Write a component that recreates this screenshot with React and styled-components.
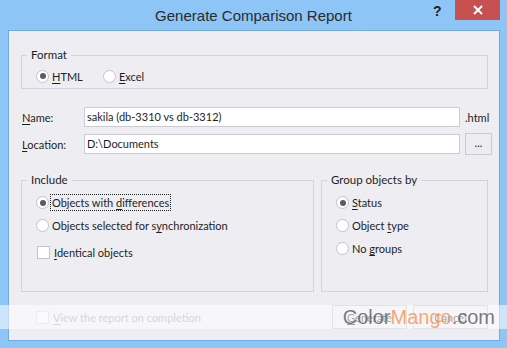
import React from "react";
import styled, { createGlobalStyle } from "styled-components";

const GlobalStyle = createGlobalStyle`
  html, body {
    margin: 0;
    padding: 0;
    overflow: hidden;
  }
  body {
    font-family: "Lato", "Liberation Sans", sans-serif;
  }
`;

const Window = styled.div`
  position: relative;
  width: 507px;
  height: 348px;
  background: #8cc5f6;
  display: flex;
  flex-direction: column;
`;

const TitleBar = styled.div`
  height: 30px;
  display: grid;
  grid-template-columns: 1fr auto 1fr;
  flex-shrink: 0;
`;

const Title = styled.div`
  grid-column: 2;
  font-family: "Liberation Sans", sans-serif;
  font-size: 15px;
  line-height: 30px;
  color: #2b2b2b;
  padding-top: 1px;
`;

const Controls = styled.div`
  grid-column: 3;
  justify-self: end;
  display: flex;
  align-items: flex-start;
  margin-right: 7px;
`;

const HelpButton = styled.div`
  width: 22px;
  font-family: "Liberation Sans", sans-serif;
  font-weight: bold;
  font-size: 14px;
  line-height: 20px;
  color: #222;
  padding-top: 1px;
`;

const CloseButton = styled.div`
  width: 45px;
  height: 20px;
  background: #c75050;
  display: flex;
  align-items: center;
  justify-content: center;
`;

const Client = styled.div`
  flex: 1;
  margin: 0 7px 7px 8px;
  background: #ededf2;
  border: 1px solid #71abdf;
  padding: 24px 11px 0 12px;
  display: flex;
  flex-direction: column;
  font-size: 11px;
  color: #1e1e1e;
`;

const GroupBox = styled.div`
  border: 1px solid #d3d3dc;
  padding: 0 0 ${(p) => p.$padBottom || 0}px 14px;
  box-sizing: border-box;
  height: ${(p) => (p.$height ? `${p.$height}px` : "auto")};
  width: ${(p) => (p.$width ? `${p.$width}px` : "auto")};
  flex: ${(p) => (p.$grow ? "1" : "none")};
  display: flex;
  flex-direction: column;
  align-items: flex-start;
`;

const Legend = styled.div`
  margin: -8px 0 0 -9px;
  padding: 0 4px;
  height: 14px;
  line-height: 14px;
  font-size: 11.5px;
  background: #ededf2;
  color: #1e1e1e;
`;

const OptionRow = styled.div`
  display: flex;
  align-items: center;
  height: ${(p) => p.$height || 23}px;
  margin-top: ${(p) => p.$gapTop || 0}px;
`;

const Option = styled.div`
  display: flex;
  align-items: center;
  width: ${(p) => (p.$width ? `${p.$width}px` : "auto")};
  color: ${(p) => (p.$disabled ? "#a3a3ae" : "#1e1e1e")};
`;

const RadioCircle = styled.span`
  box-sizing: border-box;
  width: 13px;
  height: 13px;
  border-radius: 50%;
  border: 1px solid #c2c2ca;
  background: #fff;
  display: flex;
  align-items: center;
  justify-content: center;
  flex-shrink: 0;
  margin-right: 1px;
  &::after {
    content: "";
    width: 6px;
    height: 6px;
    border-radius: 50%;
    background: ${(p) => (p.$checked ? "#5c5c5c" : "transparent")};
  }
`;

const Box = styled.span`
  box-sizing: border-box;
  width: 13px;
  height: 13px;
  border: 1px solid ${(p) => (p.$disabled ? "#d6d6de" : "#c2c2ca")};
  background: ${(p) => (p.$disabled ? "#f6f6f8" : "#fff")};
  flex-shrink: 0;
  margin-left: ${(p) => p.$offset || 0}px;
  margin-right: 2px;
`;

const Caption = styled.span`
  padding: 0 1px;
  line-height: 15px;
  border: 1px dotted ${(p) => (p.$focused ? "#222" : "transparent")};
  white-space: nowrap;
`;

const Key = styled.u`
  text-decoration: underline;
  text-underline-offset: 2px;
  text-decoration-thickness: 1px;
`;

const Fields = styled.div`
  display: grid;
  grid-template-columns: 58px 376px 27px;
  column-gap: 5px;
  row-gap: 6px;
  align-items: center;
  margin-top: 18px;
`;

const FieldLabel = styled.div`
  padding-left: 1px;
`;

const TextInput = styled.div`
  height: 20px;
  box-sizing: border-box;
  border: 1px solid #cbcbd4;
  background: #fff;
  padding-left: 2px;
  line-height: 18px;
  white-space: nowrap;
  overflow: hidden;
`;

const Suffix = styled.div`
  white-space: nowrap;
`;

const BrowseButton = styled.div`
  height: 22px;
  box-sizing: border-box;
  border: 1px solid #cacad2;
  background: #ececf1;
  text-align: center;
  line-height: 18px;
`;

const Groups = styled.div`
  display: flex;
  gap: 7px;
  margin-top: 25px;
`;

const Footer = styled.div`
  display: flex;
  align-items: center;
  height: 24px;
  margin-top: 13px;
  padding-left: 15px;
`;

const Buttons = styled.div`
  margin-left: auto;
  display: flex;
  gap: 6px;
`;

const Button = styled.div`
  width: 75px;
  height: 24px;
  box-sizing: border-box;
  border: 1px solid #c4c4cc;
  background: #ececf0;
  display: flex;
  align-items: center;
  justify-content: center;
  color: #333;
`;

const Band = styled.div`
  position: absolute;
  left: 0;
  right: 0;
  top: 305px;
  height: 24px;
  background: rgba(255, 255, 255, 0.55);
  display: flex;
  justify-content: flex-end;
  align-items: center;
  padding-right: 12px;
  box-sizing: border-box;
  font-family: "Liberation Sans", sans-serif;
  font-size: 20px;
  line-height: 24px;
  pointer-events: none;
`;

const Mark = styled.span`
  color: ${(p) => p.$color};
`;

const Radio = ({ checked, children, width, focused }) => (
  <Option $width={width}>
    <RadioCircle $checked={checked} />
    <Caption $focused={focused}>{children}</Caption>
  </Option>
);

const Check = ({ children, disabled, offset }) => (
  <Option $disabled={disabled}>
    <Box $disabled={disabled} $offset={offset} />
    <Caption>{children}</Caption>
  </Option>
);

export default function App() {
  return (
    <>
      <GlobalStyle />
      <Window>
        <TitleBar>
          <Title>Generate Comparison Report</Title>
          <Controls>
            <HelpButton>?</HelpButton>
            <CloseButton>
              <svg width="10" height="10" viewBox="0 0 10 10">
                <path d="M1 1 L9 9 M9 1 L1 9" stroke="#fff" strokeWidth="2" />
              </svg>
            </CloseButton>
          </Controls>
        </TitleBar>
        <Client>
          <GroupBox $padBottom={5}>
            <Legend>Format</Legend>
            <OptionRow $height={14} $gapTop={7}>
              <Radio checked width={67}>
                <Key>H</Key>TML
              </Radio>
              <Radio>
                <Key>E</Key>xcel
              </Radio>
            </OptionRow>
          </GroupBox>

          <Fields>
            <FieldLabel>
              <Key>N</Key>ame:
            </FieldLabel>
            <TextInput>sakila (db-3310 vs db-3312)</TextInput>
            <Suffix>.html</Suffix>
            <FieldLabel>
              <Key>L</Key>ocation:
            </FieldLabel>
            <TextInput>D:\Documents</TextInput>
            <BrowseButton>...</BrowseButton>
          </Fields>

          <Groups>
            <GroupBox $width={293} $height={112}>
              <Legend>Include</Legend>
              <OptionRow $gapTop={4}>
                <Radio checked focused>
                  Objects with <Key>d</Key>ifferences
                </Radio>
              </OptionRow>
              <OptionRow>
                <Radio>
                  Objects selected for s<Key>y</Key>nchronization
                </Radio>
              </OptionRow>
              <OptionRow $gapTop={4}>
                <Check offset={1}>
                  <Key>I</Key>dentical objects
                </Check>
              </OptionRow>
            </GroupBox>
            <GroupBox $grow $height={112}>
              <Legend>Group objects by</Legend>
              <OptionRow $gapTop={4}>
                <Radio checked>
                  <Key>S</Key>tatus
                </Radio>
              </OptionRow>
              <OptionRow>
                <Radio>
                  Object <Key>t</Key>ype
                </Radio>
              </OptionRow>
              <OptionRow>
                <Radio>
                  No <Key>g</Key>roups
                </Radio>
              </OptionRow>
            </GroupBox>
          </Groups>

          <Footer>
            <Check disabled>
              <Key>V</Key>iew the report on completion
            </Check>
            <Buttons>
              <Button>
                <span>
                  <Key>G</Key>enerate
                </span>
              </Button>
              <Button>Cancel</Button>
            </Buttons>
          </Footer>
        </Client>
        <Band>
          <Mark $color="rgba(80,80,80,0.75)">Color</Mark>
          <Mark $color="rgba(248,150,90,0.85)">Mango</Mark>
          <Mark $color="rgba(80,80,80,0.75)">.com</Mark>
        </Band>
      </Window>
    </>
  );
}
